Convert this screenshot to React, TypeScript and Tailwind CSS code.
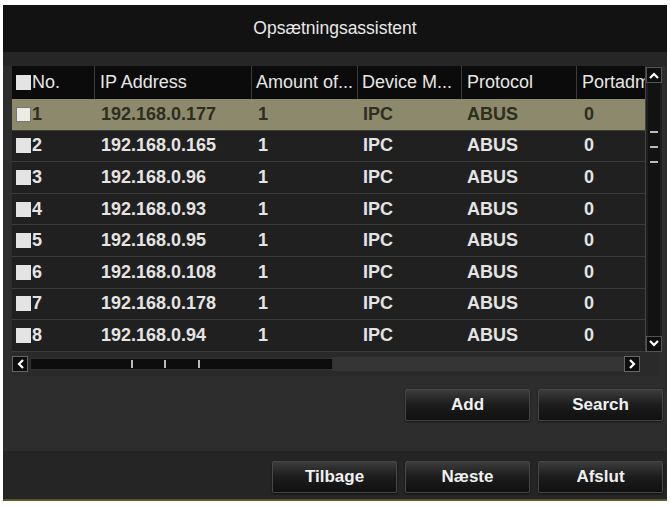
const rows = [
  { no: "1", ip: "192.168.0.177" },
  { no: "2", ip: "192.168.0.165" },
  { no: "3", ip: "192.168.0.96" },
  { no: "4", ip: "192.168.0.93" },
  { no: "5", ip: "192.168.0.95" },
  { no: "6", ip: "192.168.0.108" },
  { no: "7", ip: "192.168.0.178" },
  { no: "8", ip: "192.168.0.94" },
];

const cols = "grid grid-cols-[83px_157px_106px_104px_115px_68px]";

function Btn({ label }: { label: string }) {
  return (
    <button className="w-[125px] h-[32px] rounded-[2px] border border-[#474747] bg-gradient-to-b from-[#3c3c3c] via-[#1c1c1c] to-[#101010] text-[17px] font-bold text-[#f0f0f0] shadow-[0_1px_2px_rgba(0,0,0,0.6)]">
      {label}
    </button>
  );
}

function Box({ dim }: { dim?: boolean }) {
  return (
    <span
      className={
        "inline-block w-[15px] h-[15px] mr-[1px] " +
        (dim ? "bg-[#ecebe6] border border-[#777]" : "bg-[#e4e4e4]")
      }
    />
  );
}

export default function App() {
  return (
    <div
      className="w-[670px] h-[506px] bg-white pt-[5px] px-[3px] overflow-hidden"
      style={{ fontFamily: '"Liberation Sans", Arial, sans-serif' }}
    >
      <div className="h-[496px] flex flex-col bg-[#2d2d2d] border-b-2 border-[#5d5a2a]">
        <div className="h-[47px] bg-[#121212] flex items-center justify-center text-[17.5px] text-[#e8e8e8]">
          Opsætningsassistent
        </div>
        <div className="h-[14px] bg-[#262626]" />
        <div className="mx-[9px] flex flex-col">
          <div className="flex">
            <div className="flex flex-col">
              <div className={cols + " h-[33px] bg-[#0b0b0b] text-[18px] text-[#e6e6e6]"}>
                <div className="flex items-center pl-[4px] border-r border-[#3c3c3c]">
                  <Box />
                  No.
                </div>
                <div className="flex items-center pl-[5px] border-r border-[#3c3c3c]">IP Address</div>
                <div className="flex items-center pl-[4px] border-r border-[#3c3c3c] whitespace-nowrap overflow-hidden">Amount of...</div>
                <div className="flex items-center pl-[4px] border-r border-[#3c3c3c] whitespace-nowrap overflow-hidden">Device M...</div>
                <div className="flex items-center pl-[5px] border-r border-[#3c3c3c]">Protocol</div>
                <div className="flex items-center pl-[5px] overflow-hidden whitespace-nowrap">Portadm</div>
              </div>
              {rows.map((r, i) => (
                <div
                  key={r.no}
                  className={
                    cols +
                    " h-[31.6px] text-[18px] font-bold border-b border-[#3b3b3b] " +
                    (i === 0 ? "bg-[#8c896c] text-[#2e2e1e]" : "bg-[#202020] text-[#e4e4e4]")
                  }
                >
                  <div className="flex items-center pl-[4px]">
                    <Box dim={i === 0} />
                    {r.no}
                  </div>
                  <div className="flex items-center pl-[6px]">{r.ip}</div>
                  <div className="flex items-center pl-[6px]">1</div>
                  <div className="flex items-center pl-[5px]">IPC</div>
                  <div className="flex items-center pl-[5px]">ABUS</div>
                  <div className="flex items-center pl-[7px]">0</div>
                </div>
              ))}
            </div>
            <div className="w-[20px] flex flex-col items-center bg-[#1e1e1e] border-l border-[#444]">
              <div className="w-[16px] h-[16px] mt-[1px] bg-[#0e0e0e] border border-[#555] flex items-center justify-center">
                <svg width="10" height="7" viewBox="0 0 10 7">
                  <path d="M1 6 L5 2 L9 6" stroke="#fff" strokeWidth="2.2" fill="none" />
                </svg>
              </div>
              <div className="flex-1 w-[12px] bg-[#121212] flex flex-col items-center pt-[48px] gap-[13px]">
                <span className="w-[8px] h-[2px] bg-[#bbb]" />
                <span className="w-[8px] h-[2px] bg-[#bbb]" />
                <span className="w-[8px] h-[2px] bg-[#bbb]" />
              </div>
              <div className="w-[16px] h-[16px] bg-[#0e0e0e] border border-[#555] flex items-center justify-center">
                <svg width="10" height="7" viewBox="0 0 10 7">
                  <path d="M1 1 L5 5 L9 1" stroke="#fff" strokeWidth="2.2" fill="none" />
                </svg>
              </div>
            </div>
          </div>
          <div className="flex items-center h-[24px] pr-[18px] bg-[#2a2a2a]">
            <div className="w-[16px] h-[16px] bg-[#0e0e0e] border border-[#666] flex items-center justify-center">
              <svg width="7" height="10" viewBox="0 0 7 10">
                <path d="M6 1 L2 5 L6 9" stroke="#fff" strokeWidth="2.2" fill="none" />
              </svg>
            </div>
            <div className="w-[303px] h-[12px] ml-[2px] bg-[#0d0d0d] border border-[#333] flex items-center">
              <span className="ml-[100px] w-[2px] h-[8px] bg-[#bbb]" />
              <span className="ml-[31px] w-[2px] h-[8px] bg-[#bbb]" />
              <span className="ml-[32px] w-[2px] h-[8px] bg-[#bbb]" />
            </div>
            <div className="flex-1 h-[14px] bg-[#353535]" />
            <div className="w-[16px] h-[16px] bg-[#0e0e0e] border border-[#666] flex items-center justify-center">
              <svg width="7" height="10" viewBox="0 0 7 10">
                <path d="M1 1 L5 5 L1 9" stroke="#fff" strokeWidth="2.2" fill="none" />
              </svg>
            </div>
          </div>
        </div>
        <div className="flex justify-end gap-[8px] pr-[4px] pt-[13px] pb-[30px]">
          <Btn label="Add" />
          <Btn label="Search" />
        </div>
        <div className="flex-1 bg-[#252525] flex justify-end items-start gap-[8px] pr-[4px] pt-[10px]">
          <Btn label="Tilbage" />
          <Btn label="Næste" />
          <Btn label="Afslut" />
        </div>
      </div>
    </div>
  );
}
